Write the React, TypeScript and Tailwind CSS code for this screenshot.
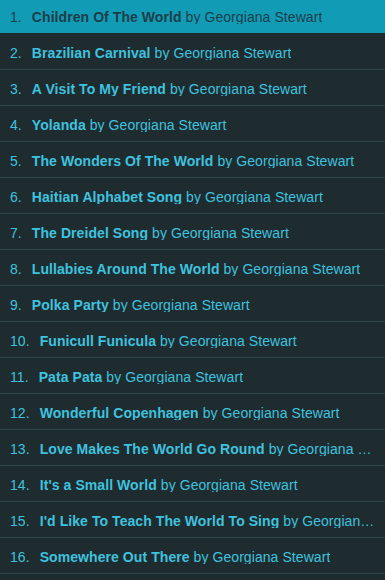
import React from "react";

const songs = [
  "Children Of The World",
  "Brazilian Carnival",
  "A Visit To My Friend",
  "Yolanda",
  "The Wonders Of The World",
  "Haitian Alphabet Song",
  "The Dreidel Song",
  "Lullabies Around The World",
  "Polka Party",
  "Funicull Funicula",
  "Pata Pata",
  "Wonderful Copenhagen",
  "Love Makes The World Go Round",
  "It's a Small World",
  "I'd Like To Teach The World To Sing",
  "Somewhere Out There",
];

export default function App() {
  return (
    <div
      className="w-[385px] h-[580px] overflow-hidden bg-[#1e2c2f]"
      style={{ fontFamily: '"Liberation Sans", Arial, sans-serif' }}
    >
      <ul className="-mt-[2px]">
        {songs.map((title, i) => {
          const active = i === 0;
          return (
            <li
              key={title}
              className={
                active
                  ? "h-[36px] border-b border-[#1e2c2f] bg-[#129bb5] text-[#1b3e4a] pl-[10px] pr-[9px] pt-[2px] flex items-center text-[14px] leading-none"
                  : "h-[36px] border-b border-[#2f4649] text-[#3ec2df] pl-[10px] pr-[9px] pt-[2px] flex items-center text-[14px] leading-none"
              }
            >
              <div className="min-w-0 truncate whitespace-nowrap tracking-[0.07px]">
                <span className="mr-[10px]">{i + 1}.</span>
                <span className="font-bold">{title}</span>
                <span> by Georgiana Stewart</span>
              </div>
            </li>
          );
        })}
      </ul>
    </div>
  );
}
